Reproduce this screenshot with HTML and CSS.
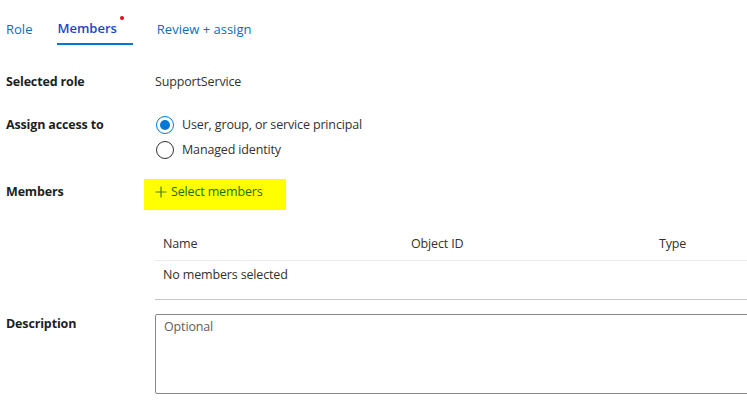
FILE: index.html
```html
<!DOCTYPE html>
<html>
<head>
<meta charset="utf-8">
<link rel="stylesheet" href="styles.css">
</head>
<body>
<div class="page">
  <nav class="tabs">
    <span class="tab">Role</span>
    <span class="tab active">Members<span class="dot"></span></span>
    <span class="tab">Review + assign</span>
  </nav>

  <div class="row row-role">
    <div class="label">Selected role</div>
    <div class="value">SupportService</div>
  </div>

  <div class="row row-access">
    <div class="label">Assign access to</div>
    <div class="radios">
      <div class="radio"><span class="circle checked"></span><span>User, group, or service principal</span></div>
      <div class="radio"><span class="circle"></span><span>Managed identity</span></div>
    </div>
  </div>

  <div class="row row-members">
    <div class="label">Members</div>
    <div class="select"><svg class="plus" width="12" height="12" viewBox="0 0 12 12"><path d="M6 0.5V11.5M0.5 6H11.5" stroke="#4f7a12" stroke-width="1.2" fill="none"/></svg>Select members</div>
  </div>

  <div class="table">
    <div class="thead">
      <div class="cell">Name</div>
      <div class="cell">Object ID</div>
      <div class="cell">Type</div>
    </div>
    <div class="tbody">No members selected</div>
  </div>

  <div class="row row-desc">
    <div class="label">Description</div>
    <div class="textarea">Optional</div>
  </div>
</div>
</body>
</html>
```
FILE: styles.css
```css
html, body {
  margin: 0;
  padding: 0;
  background: #fff;
  overflow: hidden;
}
body {
  font-family: "Open Sans", "Noto Sans", sans-serif;
  font-size: 12.5px;
  letter-spacing: -0.15px;
  color: #323130;
}
.page {
  padding-left: 6px;
  width: 741px;
  height: 409px;
  overflow: hidden;
}
.tabs {
  display: flex;
  height: 45px;
  align-items: stretch;
  letter-spacing: 0;
}
.tab {
  position: relative;
  display: flex;
  align-items: center;
  color: #0f6cbd;
  padding-top: 12px;
  margin-right: 25px;
  font-size: 13px;
}
.tab.active {
  font-weight: 600;
  color: #1a47c8;
  padding-right: 16px;
  border-bottom: 2px solid #0078d4;
  margin-right: 24px;
}
.dot {
  position: absolute;
  right: 9px;
  top: 16px;
  width: 4px;
  height: 4px;
  border-radius: 50%;
  background: #e00b1c;
}
.row {
  display: flex;
}
.label {
  width: 149px;
  flex: none;
  font-weight: 700;
  color: #201f1e;
}
.row-role {
  margin-top: 27px;
  line-height: 20px;
}
.row-access {
  margin-top: 23px;
  line-height: 20px;
}
.radios {
  display: flex;
  flex-direction: column;
  gap: 5px;
}
.radio {
  display: flex;
  align-items: center;
  height: 20px;
}
.circle {
  box-sizing: border-box;
  width: 18px;
  height: 18px;
  border: 1px solid #323130;
  border-radius: 50%;
  margin-left: 1px;
  margin-right: 8px;
  position: relative;
}
.circle.checked {
  border-color: #0078d4;
}
.circle.checked::after {
  content: "";
  position: absolute;
  left: 3px;
  top: 3px;
  width: 10px;
  height: 10px;
  border-radius: 50%;
  background: #0078d4;
}
.row-members {
  margin-top: 19px;
  align-items: flex-start;
}
.row-members .label {
  width: 138px;
  margin-top: 4px;
}
.select {
  display: flex;
  align-items: center;
  background: #ffff00;
  color: #1f6b12;
  width: 142px;
  height: 31px;
  box-sizing: border-box;
  padding-left: 11px;
  padding-bottom: 5px;
  line-height: 20px;
}
.plus {
  margin-right: 4px;
  margin-top: -1px;
}
.table {
  margin-left: 149px;
  margin-top: 22px;
}
.thead {
  display: grid;
  grid-template-columns: 248px 248px 1fr;
  height: 29px;
  box-sizing: border-box;
  padding-bottom: 6px;
  align-items: center;
  border-bottom: 1px solid #edebe9;
  padding-left: 8px;
}
.tbody {
  height: 38px;
  padding-left: 8px;
  line-height: 28px;
  border-bottom: 1px solid #c8c6c4;
}
.row-desc {
  margin-top: 14px;
}
.row-desc .label {
  margin-top: 1px;
}
.textarea {
  flex: none;
  width: 640px;
  height: 80px;
  box-sizing: border-box;
  border: 1px solid #8a8886;
  border-radius: 2px;
  color: #605e5c;
  padding: 3px 8px;
}
```
